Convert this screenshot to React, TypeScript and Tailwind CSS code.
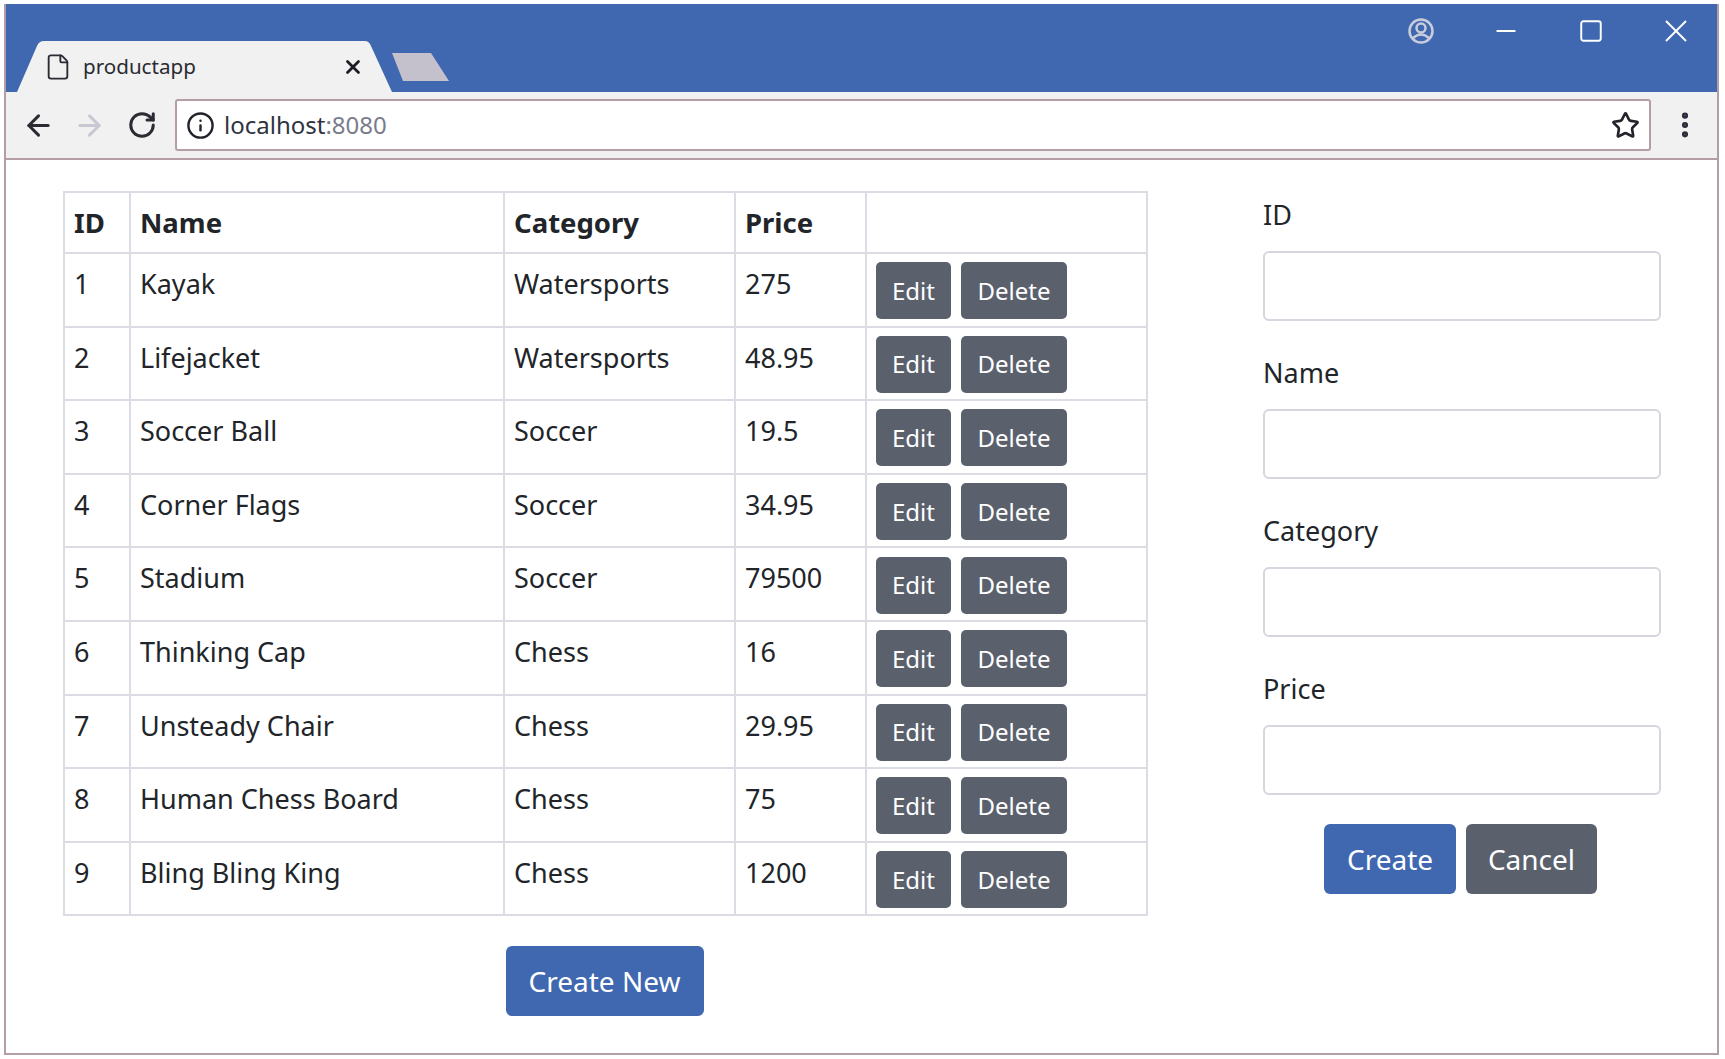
import { ArrowLeft, ArrowRight, EllipsisVertical, File, Info, Minus, RotateCw, Square, Star, X } from 'lucide-react';

interface Product {
  id: number;
  name: string;
  category: string;
  price: string;
}

const products: Product[] = [
  { id: 1, name: 'Kayak', category: 'Watersports', price: '275' },
  { id: 2, name: 'Lifejacket', category: 'Watersports', price: '48.95' },
  { id: 3, name: 'Soccer Ball', category: 'Soccer', price: '19.5' },
  { id: 4, name: 'Corner Flags', category: 'Soccer', price: '34.95' },
  { id: 5, name: 'Stadium', category: 'Soccer', price: '79500' },
  { id: 6, name: 'Thinking Cap', category: 'Chess', price: '16' },
  { id: 7, name: 'Unsteady Chair', category: 'Chess', price: '29.95' },
  { id: 8, name: 'Human Chess Board', category: 'Chess', price: '75' },
  { id: 9, name: 'Bling Bling King', category: 'Chess', price: '1200' },
];

const fields = ['ID', 'Name', 'Category', 'Price'];

function BrowserChrome() {
  return (
    <>
      <div className="flex h-[88px] bg-[#3f68b0]">
        <div className="relative ml-[11px] mt-[37px] h-[51px] w-[375px]">
          <svg className="absolute inset-0" width="375" height="51" viewBox="0 0 375 51">
            <path d="M0 51 L20 5 Q22 0 27 0 L348 0 Q352 0 354 5 L375 51 Z" fill="#f1f1f1" />
          </svg>
          <div className="relative flex h-full items-center">
            <File className="ml-[27px] h-[28px] w-[28px] text-[#2b2b33]" strokeWidth={1.6} />
            <span className="ml-[11px] text-[20.6px] text-[#2b2b33]">productapp</span>
            <X className="ml-[146px] h-[22px] w-[22px] text-[#1d1d24]" strokeWidth={3} />
          </div>
        </div>
        <svg className="mt-[49px]" width="57" height="28" viewBox="0 0 57 28">
          <path d="M0 0 L39 0 L57 28 L11 28 Z" fill="#c4c0cc" />
        </svg>
        <div className="ml-auto mr-[22px] mt-[8px] flex h-[38px] items-center text-white">
          <svg className="mr-[57px]" width="26" height="26" viewBox="0 0 26 26" fill="none" stroke="#c9cddb" strokeWidth="2.5">
            <circle cx="13" cy="13" r="11.5" />
            <circle cx="13" cy="10" r="4.5" />
            <path d="M5 20 Q13 13 21 20" />
          </svg>
          <Minus className="mr-[57px] h-[30px] w-[30px]" strokeWidth={1.5} />
          <Square className="mr-[53px] h-[26px] w-[26px]" strokeWidth={1.8} />
          <X className="h-[38px] w-[38px]" strokeWidth={1.2} />
        </div>
      </div>
      <div className="flex h-[68px] items-center border-b-2 border-[#b39ea6] bg-[#f1f1f1]">
        <ArrowLeft className="ml-[16px] h-[33px] w-[33px] text-[#2b2b33]" strokeWidth={2.2} />
        <ArrowRight className="ml-[18px] h-[33px] w-[33px] text-[#c9c7d2]" strokeWidth={2.2} />
        <RotateCw className="ml-[21px] h-[30px] w-[30px] text-[#2b2b33]" strokeWidth={2.4} />
        <div className="ml-[18px] flex h-[52px] w-[1476px] items-center rounded-[3px] border-2 border-[#b39ea6] bg-white">
          <Info className="ml-[9px] h-[29px] w-[29px] text-[#22222a]" strokeWidth={2} />
          <span className="ml-[9px] text-[24px] text-[#2f3340]">
            localhost<span className="text-[#7a7c8c]">:8080</span>
          </span>
          <Star className="ml-auto mr-[9px] h-[29px] w-[29px] text-[#22222a]" strokeWidth={2.2} />
        </div>
        <EllipsisVertical className="ml-[18px] h-[32px] w-[32px] text-[#2b2b3a]" strokeWidth={2.6} />
      </div>
    </>
  );
}

export default function App() {
  return (
    <div className="h-[1059px] w-[1725px] bg-white pl-[4px] pt-[4px] font-['Noto_Sans',sans-serif] text-[#212529]">
      <div className="h-[1051px] w-[1715px] border-x-2 border-b-2 border-[#b39ea6]">
        <BrowserChrome />
        <div className="flex pl-[57px] pt-[31px]">
          <div className="w-[1083px]">
            <table className="w-[1083px] table-fixed border-collapse text-[27px] leading-[40px]">
              <colgroup>
                <col className="w-[66px]" />
                <col className="w-[374px]" />
                <col className="w-[231px]" />
                <col className="w-[131px]" />
                <col className="w-[281px]" />
              </colgroup>
              <thead>
                <tr className="h-[61px] text-left text-[27.5px]">
                  <th className="border-2 border-[#dcdce4] px-[9px] font-bold">ID</th>
                  <th className="border-2 border-[#dcdce4] px-[9px] font-bold">Name</th>
                  <th className="border-2 border-[#dcdce4] px-[9px] font-bold">Category</th>
                  <th className="border-2 border-[#dcdce4] px-[9px] font-bold">Price</th>
                  <th className="border-2 border-[#dcdce4]"></th>
                </tr>
              </thead>
              <tbody>
                {products.map((p) => (
                  <tr key={p.id} className="h-[73.6px]">
                    <td className="border-2 border-[#dcdce4] px-[9px] pb-[19px] pt-[10px] align-top">{p.id}</td>
                    <td className="border-2 border-[#dcdce4] px-[9px] pb-[19px] pt-[10px] align-top">{p.name}</td>
                    <td className="border-2 border-[#dcdce4] px-[9px] pb-[19px] pt-[10px] align-top">{p.category}</td>
                    <td className="border-2 border-[#dcdce4] px-[9px] pb-[19px] pt-[10px] align-top">{p.price}</td>
                    <td className="border-2 border-[#dcdce4] px-[9px] pt-[2px] align-middle">
                      <div className="flex gap-[10px]">
                        <button className="h-[57px] w-[75px] rounded-[5px] bg-[#5a616d] text-[24px] text-white">Edit</button>
                        <button className="h-[57px] w-[106px] rounded-[5px] bg-[#5a616d] text-[24px] text-white">Delete</button>
                      </div>
                    </td>
                  </tr>
                ))}
              </tbody>
            </table>
            <div className="mt-[30px] flex justify-center">
              <button className="h-[70px] w-[198px] rounded-[6px] bg-[#3f68b0] text-[28px] text-white">Create New</button>
            </div>
          </div>
          <div className="ml-[117px] w-[398px] pt-[4px]">
            {fields.map((f) => (
              <div key={f} className="mb-[32px]">
                <label className="mb-[16px] block text-[27px] leading-[40px]">{f}</label>
                <input className="block h-[70px] w-full rounded-[6px] border-2 border-[#d5d6de] bg-white" />
              </div>
            ))}
            <div className="mr-[3px] mt-[-3px] flex justify-center gap-[10px]">
              <button className="h-[70px] w-[132px] rounded-[6px] bg-[#3f68b0] text-[28px] text-white">Create</button>
              <button className="h-[70px] w-[131px] rounded-[6px] bg-[#5a616d] text-[28px] text-white">Cancel</button>
            </div>
          </div>
        </div>
      </div>
    </div>
  );
}
